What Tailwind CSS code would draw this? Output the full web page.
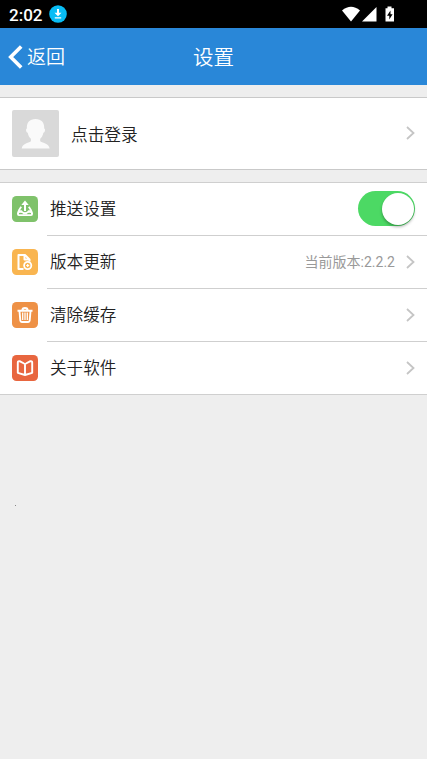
<!DOCTYPE html>
<html lang="zh-CN">
<head>
<meta charset="utf-8">
<title>设置</title>
<script src="https://cdn.jsdelivr.net/npm/@tailwindcss/browser@4"></script>
</head>
<body class="h-[759px] overflow-hidden bg-[#eeeeee] font-['Roboto','Noto_Sans_CJK_SC',sans-serif] font-[350] text-[#222222]">
<div class="flex h-7 items-center bg-black pl-[9px] text-white">
  <span class="w-10 text-[17px] leading-7 font-medium pt-px">2:02</span>
  <svg class="size-[18px]" viewBox="0 0 18 18"><circle cx="9" cy="9" r="8.8" fill="#08bdf5"/><path d="M9 4v6" stroke="#fff" stroke-width="2"/><path d="M5.500 7.700h7L9 11.300zM5.800 12.200h6.400v1.300H5.800z" fill="#fff"/></svg>
  <svg class="ml-auto mr-[31px] h-5 w-[54px]" viewBox="0 0 54 20" fill="#fff"><path d="M0 6.500Q9-1 18 6.500L9 17.500z"/><path d="M34.500 3v14.500H20z"/><path d="M43.500 4.300h2V2.500h4v1.800h2.500v13.200h-8.500z"/><path d="M48.500 6.500 45 11.800h2.300V15.500l3.300-5.300h-2.100z" fill="#000"/></svg>
</div>
<header class="grid h-[57px] grid-cols-3 items-center bg-[#2987d8] text-white">
  <div class="flex items-center pl-2">
    <svg class="h-6 w-[15px]" viewBox="0 0 15 24"><path d="M13.200 1.500 2.700 12l10.500 10.500" fill="none" stroke="#fff" stroke-width="3.600"/></svg>
    <span class="ml-1 pt-[3px] text-[19px] leading-7 whitespace-nowrap">返回</span>
  </div>
  <h1 class="pt-[3px] text-center text-[20.500px] leading-7 font-[350]">设置</h1>
</header>
<section class="mt-3 flex h-[73px] items-center border-y border-[#c9c9c9] bg-white pr-3 pl-3">
  <svg class="size-[47px]" viewBox="0 0 47 47"><rect width="47" height="47" rx="2" fill="#d9d9d9"/><path d="M23.500 9c6 0 9 3.500 8.700 9.500 1.400.2 1 3.800-.8 4.300-.6 3-1.800 4.700-3.200 6v2.400c3 2 8.700 2.200 9.400 7.300H9.700c.7-5.100 6.400-5.300 9.200-7.300v-2.400c-1.400-1.300-2.600-3-3.200-6-1.800-.5-2.200-4.100-.8-4.300C14.600 12.500 17.500 9 23.500 9z" fill="#fafafa"/></svg>
  <span class="ml-3 pt-1 text-[16.700px]">点击登录</span>
  <svg class="ml-auto mb-px h-[14px] w-[9px]" viewBox="0 0 9 14"><path d="m1 1 6.500 6L1 13" fill="none" stroke="#c5c5c5" stroke-width="1.800"/></svg>
</section>
<section class="mt-3 border-y border-[#cfcfcf] bg-white text-[16.600px]">
  <div class="flex h-[52px] items-center pl-3">
    <svg class="size-[26px] shrink-0" viewBox="0 0 26 26"><rect width="26" height="26" rx="4.500" fill="#7fc26b"/><path d="M13 15V8" stroke="#fff" stroke-width="2"/><path d="M13 4.500 16.700 9H9.300z" fill="#fff"/><path d="M9.200 10.800 6.500 15M16.800 10.800l2.700 4.200" stroke="#fff" stroke-width="1.800"/><path d="M6.800 14.300h2.900q1 2 3.300 2t3.300-2h2.900q1.800.8 1.800 3v.8q0 2-2 2H7q-2 0-2-2v-.8q0-2.200 1.800-3z" fill="#fff"/><path d="M7 17q3-.6 3.700.5 1 .9 2.300.9t2.300-.9Q16 16.400 19 17v1.300H7z" fill="#7fc26b"/></svg>
    <div class="ml-[9px] flex h-full grow items-center pl-[3px] pr-3">
      <span class="pt-[3px]">推送设置</span>
      <div class="ml-auto mb-px flex h-[35px] w-[57px] items-center justify-end rounded-full bg-[#4cd964] pr-px"><div class="size-8 rounded-full bg-white shadow-[0_2px_3px_rgba(0,0,0,0.3)]"></div></div>
    </div>
  </div>
  <div class="flex h-[53px] items-center pl-3">
    <svg class="size-[26px] shrink-0" viewBox="0 0 26 26"><rect width="26" height="26" rx="4.500" fill="#f9b550"/><path d="M11.500 20H6.500V6H13l4.500 4.500v2M12.500 6v4.500h5" fill="none" stroke="#fff" stroke-width="2" stroke-linejoin="round"/><circle cx="15.700" cy="16.500" r="3.600" fill="#f9b550" stroke="#fff" stroke-width="1.800"/><path d="M15.700 15v3M14.200 16.500h3" stroke="#fff" stroke-width="1.200"/></svg>
    <div class="ml-[9px] flex h-full grow items-center border-t border-[#cfcfcf] pl-[3px] pr-3">
      <span class="pt-[3px]">版本更新</span>
      <span class="ml-auto mr-[11px] pt-px text-[14px] font-normal text-[#999999]">当前版本:2.2.2</span>
      <svg class="mb-px h-[14px] w-[9px]" viewBox="0 0 9 14"><path d="m1 1 6.500 6L1 13" fill="none" stroke="#c5c5c5" stroke-width="1.800"/></svg>
    </div>
  </div>
  <div class="flex h-[53px] items-center pl-3">
    <svg class="size-[26px] shrink-0" viewBox="0 0 26 26"><rect width="26" height="26" rx="4.500" fill="#ee9146"/><path d="M5.500 8.700h15M10.300 8.500q0-2.500 2.700-2.500t2.700 2.500M7.500 9l.8 9.500q.1 1.500 1.500 1.500h6.400q1.400 0 1.500-1.500L18.500 9" fill="none" stroke="#fff" stroke-width="1.900" stroke-linejoin="round"/><path d="M10.700 10.500V18M13 10.500V18M15.300 10.500V18" stroke="#fff" stroke-width="1.300"/></svg>
    <div class="ml-[9px] flex h-full grow items-center border-t border-[#cfcfcf] pl-[3px] pr-3">
      <span class="pt-[3px]">清除缓存</span>
      <svg class="ml-auto mb-px h-[14px] w-[9px]" viewBox="0 0 9 14"><path d="m1 1 6.500 6L1 13" fill="none" stroke="#c5c5c5" stroke-width="1.800"/></svg>
    </div>
  </div>
  <div class="flex h-[53px] items-center pl-3">
    <svg class="size-[26px] shrink-0" viewBox="0 0 26 26"><rect width="26" height="26" rx="4.500" fill="#e8663f"/><path d="M13 9 8 6.300Q5.800 5.800 5.800 7.500v10.300L13 20l7.200-2.200V7.500q0-1.700-2.200-1.200zM13 9v11" fill="none" stroke="#fff" stroke-width="1.900" stroke-linejoin="round"/><path d="M12 6.500 13 8l1-1.500z" fill="#e8663f"/></svg>
    <div class="ml-[9px] flex h-full grow items-center border-t border-[#cfcfcf] pl-[3px] pr-3">
      <span class="pt-[3px]">关于软件</span>
      <svg class="ml-auto mb-px h-[14px] w-[9px]" viewBox="0 0 9 14"><path d="m1 1 6.500 6L1 13" fill="none" stroke="#c5c5c5" stroke-width="1.800"/></svg>
    </div>
  </div>
</section>
<div class="mt-[110px] ml-[15px] size-px bg-[#888888]"></div>
</body>
</html>
